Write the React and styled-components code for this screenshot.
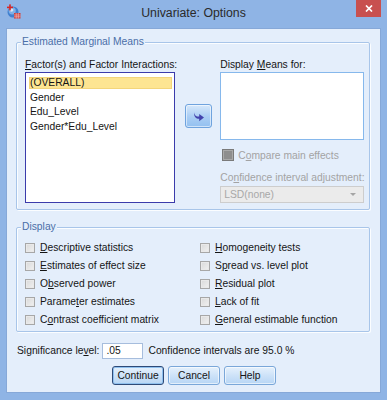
import React from "react";
import styled, { createGlobalStyle } from "styled-components";

const Global = createGlobalStyle`
  html, body { margin: 0; padding: 0; background: #8fb4e5; overflow: hidden; }
  body { font-family: "Liberation Sans", Arial, sans-serif; }
`;

const Window = styled.div`
  width: 387px;
  height: 400px;
  background: #8fb4e5;
  display: flex;
  flex-direction: column;
  font-family: "Liberation Sans", Arial, sans-serif;
  font-size: 10.3px;
  color: #151515;
`;

const TitleBar = styled.div`
  height: 29px;
  flex: none;
  display: grid;
  grid-template-columns: 1fr auto 1fr;
`;

const AppIcon = styled.svg`
  width: 15px;
  height: 15px;
  margin: 4px 0 0 6px;
  align-self: start;
`;

const Title = styled.div`
  line-height: 26px;
  font-size: 12.3px;
  color: #2a2a2a;
  white-space: nowrap;
`;

const CloseButton = styled.div`
  justify-self: end;
  align-self: start;
  width: 25px;
  height: 17px;
  margin-right: 6px;
  background: #c8504f;
  display: flex;
  align-items: center;
  justify-content: center;
`;

const Client = styled.div`
  flex: 1;
  margin: 0 7px 8px 7px;
  background: #e4eefb;
  box-shadow: 0 0 0 1px #86a8d8;
  display: flex;
  flex-direction: column;
`;

const Group = styled.div`
  margin: ${(p) => p.$top}px 10px 0 9px;
  border: 1px solid #a8c5e9;
  border-radius: 2px;
  box-shadow: inset 1px 1px 0 #fbfdff, 1px 1px 0 #fbfdff;
  display: flex;
  flex-direction: column;
  padding-bottom: ${(p) => p.$bottom}px;
`;

const Legend = styled.div`
  align-self: flex-start;
  margin: -7px 0 0 4px;
  padding: 0 1px;
  line-height: 12px;
  height: 12px;
  background: #e4eefb;
  color: #4b6ea8;
`;

const MeansBody = styled.div`
  margin-top: 11px;
  padding-left: 8px;
  display: flex;
  align-items: flex-start;
`;

const Column = styled.div`
  display: flex;
  flex-direction: column;
`;

const FieldLabel = styled.div`
  line-height: 12px;
  height: 12px;
  white-space: nowrap;
  color: ${(p) => (p.$disabled ? "#a3a3a3" : "#151515")};
  margin-top: ${(p) => p.$mt || 0}px;
`;

const U = styled.span`
  text-decoration: underline;
`;

const ListBox = styled.div`
  margin-top: 1px;
  width: ${(p) => p.$w}px;
  height: ${(p) => p.$h}px;
  box-sizing: border-box;
  background: #fff;
  border: 1px solid ${(p) => (p.$focused ? "#3b3bab" : "#86b8ec")};
  padding: 4px 2px 0 3px;
  display: flex;
  flex-direction: column;
`;

const ListItem = styled.div`
  height: 12px;
  line-height: 12px;
  margin-bottom: 2.5px;
  padding-left: 1px;
  box-sizing: border-box;
  background: ${(p) => (p.$selected ? "#fde592" : "transparent")};
  box-shadow: ${(p) => (p.$selected ? "inset 0 0 0 1px #f3d57a" : "none")};
  white-space: nowrap;
`;

const MoveButton = styled.div`
  margin: 45px 8px 0 8px;
  width: 27px;
  height: 24px;
  box-sizing: border-box;
  border: 1px solid #6fa3de;
  border-radius: 3px;
  background: linear-gradient(#d6e8fb, #a9cdf4 55%, #93c0f0);
  box-shadow: inset 0 0 0 1px rgba(255, 255, 255, 0.55);
  display: flex;
  align-items: center;
  justify-content: center;
`;

const CompareRow = styled.div`
  margin: 7px 0 0 2px;
  height: 16px;
  display: flex;
  align-items: center;
  gap: 4px;
  color: #a3a3a3;
`;

const DisabledBox = styled.span`
  width: 12px;
  height: 12px;
  box-sizing: border-box;
  border: 1px solid #7a7a7a;
  background: #8e8e8e;
  box-shadow: inset 0 0 0 1px #a9a9a9;
  flex: none;
`;

const Select = styled.div`
  margin-top: 2px;
  width: 144px;
  height: 17px;
  box-sizing: border-box;
  border: 1px solid #cdcdcd;
  background: #ebebeb;
  color: #a8a8a8;
  display: flex;
  align-items: center;
  justify-content: space-between;
  padding: 0 7px 0 3px;
`;

const Caret = styled.span`
  width: 0;
  height: 0;
  border-left: 3.5px solid transparent;
  border-right: 3.5px solid transparent;
  border-top: 3.5px solid #a5a5a5;
`;

const OptionGrid = styled.div`
  margin-top: 6px;
  padding-left: 8px;
  display: grid;
  grid-template-columns: 175px 1fr;
  grid-auto-rows: 18px;
`;

const Option = styled.label`
  display: flex;
  align-items: center;
  gap: 5px;
  white-space: nowrap;
  line-height: 12px;
`;

const Box = styled.span`
  width: 10px;
  height: 10px;
  box-sizing: border-box;
  border: 1px solid #a7a7a7;
  background: linear-gradient(135deg, #d9d9d9, #f1f1f1);
  box-shadow: inset 0 0 0 1px #e9e9e9;
  flex: none;
`;

const SigRow = styled.div`
  margin: 10px 0 0 10px;
  height: 17px;
  display: flex;
  align-items: center;
  white-space: nowrap;
`;

const Input = styled.div`
  margin: 0 5px 0 3px;
  width: 41px;
  height: 16px;
  box-sizing: border-box;
  border: 1px solid #a6bddd;
  background: #fff;
  line-height: 14px;
  padding-left: 3px;
`;

const ButtonRow = styled.div`
  margin-top: 7px;
  display: flex;
  justify-content: center;
  gap: 4px;
  padding-left: 1px;
`;

const Button = styled.div`
  width: 52px;
  height: 19px;
  box-sizing: border-box;
  border: 1px solid ${(p) => (p.$default ? "#2e4a78" : "#7aa7d9")};
  border-radius: 3px;
  background: linear-gradient(#e6f1fc, #cde2f8 50%, #b8d6f5);
  box-shadow: inset 0 0 0 1px ${(p) => (p.$default ? "#8fc0ee" : "rgba(255,255,255,0.6)")};
  display: flex;
  align-items: center;
  justify-content: center;
  line-height: 12px;
`;

const leftOptions = [
  ["", "D", "escriptive statistics"],
  ["", "E", "stimates of effect size"],
  ["O", "b", "served power"],
  ["Parame", "t", "er estimates"],
  ["C", "o", "ntrast coefficient matrix"],
];
const rightOptions = [
  ["", "H", "omogeneity tests"],
  ["S", "p", "read vs. level plot"],
  ["", "R", "esidual plot"],
  ["", "L", "ack of fit"],
  ["", "G", "eneral estimable function"],
];

function Opt({ parts }) {
  return (
    <Option>
      <Box />
      <span>
        {parts[0]}
        <U>{parts[1]}</U>
        {parts[2]}
      </span>
    </Option>
  );
}

export default function App() {
  const rows = [];
  for (let i = 0; i < 5; i++) {
    rows.push(<Opt key={"l" + i} parts={leftOptions[i]} />);
    rows.push(<Opt key={"r" + i} parts={rightOptions[i]} />);
  }
  return (
    <Window>
      <Global />
      <TitleBar>
        <AppIcon viewBox="0 0 15 15">
          <circle cx="7" cy="8" r="5.5" fill="#3f7fcf" />
          <circle cx="6.2" cy="6.8" r="3.6" fill="#7fb0e6" />
          <circle cx="5.6" cy="6" r="1.8" fill="#cfe3f8" />
          <rect x="1" y="2.6" width="6" height="1.6" fill="#d82626" />
          <rect x="3.2" y="0.4" width="1.6" height="6" fill="#d82626" />
          <rect x="8" y="9" width="6.5" height="5.5" fill="#c83a3a" />
          <path d="M8 11h6.5M8 12.8h6.5M10.2 9v5.5M12.3 9v5.5" stroke="#f4c8c8" strokeWidth="0.6" />
        </AppIcon>
        <Title>Univariate: Options</Title>
        <CloseButton>
          <svg width="8" height="7" viewBox="0 0 8 7">
            <path d="M1 0.5L7 6.5M7 0.5L1 6.5" stroke="#fff" strokeWidth="1.7" />
          </svg>
        </CloseButton>
      </TitleBar>
      <Client>
        <Group $top={13} $bottom={6}>
          <Legend>Estimated Marginal Means</Legend>
          <MeansBody>
            <Column>
              <FieldLabel>
                <U>F</U>actor(s) and Factor Interactions:
              </FieldLabel>
              <ListBox $w={150} $h={131} $focused>
                <ListItem $selected>(OVERALL)</ListItem>
                <ListItem>Gender</ListItem>
                <ListItem>Edu_Level</ListItem>
                <ListItem>Gender*Edu_Level</ListItem>
              </ListBox>
            </Column>
            <MoveButton>
              <svg width="12" height="11" viewBox="0 0 12 11">
                <path
                  d="M1 1.2 C1.5 4.6 3.6 5.6 6.2 5.6 L6.2 3 L11 6.6 L6.2 10.2 L6.2 7.8 C3 7.8 0.8 5.8 1 1.2 Z"
                  fill="#4343ad"
                />
              </svg>
            </MoveButton>
            <Column>
              <FieldLabel>
                Display <U>M</U>eans for:
              </FieldLabel>
              <ListBox $w={144} $h={68} />
              <CompareRow>
                <DisabledBox />
                <span>
                  C<U>o</U>mpare main effects
                </span>
              </CompareRow>
              <FieldLabel $disabled $mt={9}>
                Co<U>n</U>fidence interval adjustment:
              </FieldLabel>
              <Select>
                <span>LSD(none)</span>
                <Caret />
              </Select>
            </Column>
          </MeansBody>
        </Group>
        <Group $top={17} $bottom={2}>
          <Legend>Display</Legend>
          <OptionGrid>{rows}</OptionGrid>
        </Group>
        <SigRow>
          <span>
            Significance le<U>v</U>el:
          </span>
          <Input>.05</Input>
          <span>Confidence intervals are 95.0 %</span>
        </SigRow>
        <ButtonRow>
          <Button $default>Continue</Button>
          <Button>Cancel</Button>
          <Button>Help</Button>
        </ButtonRow>
      </Client>
    </Window>
  );
}
